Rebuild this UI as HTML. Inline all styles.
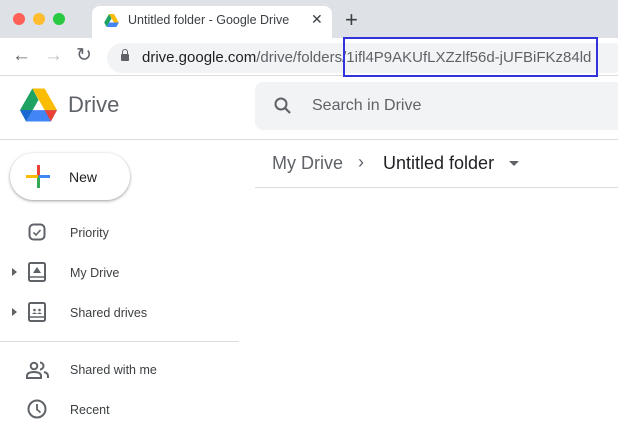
<!DOCTYPE html><html><head><style>
body{margin:0;width:618px;height:423px;overflow:hidden;background:#fff;font-family:"Liberation Sans",sans-serif;position:relative}
.a{position:absolute}
.nav{font-size:12.5px;color:#3c4043;left:70px}
</style></head><body>
<div class="a" style="left:0;top:0;width:618px;height:38px;background:#dee1e6"></div>
<div class="a" style="left:13px;top:13px;width:12px;height:12px;border-radius:50%;background:#fe5f57"></div>
<div class="a" style="left:33px;top:13px;width:12px;height:12px;border-radius:50%;background:#febc2e"></div>
<div class="a" style="left:53px;top:13px;width:12px;height:12px;border-radius:50%;background:#28c840"></div>
<div class="a" style="left:92px;top:6px;width:240px;height:34px;background:#fff;border-radius:8px 8px 0 0"></div>
<svg class="a" style="left:104px;top:14px" width="15" height="13" viewBox="0 0 36 32"><path d="M12 0h12l12 21H24z" fill="#fbbc04"/><path d="M12 0L0 21l6 11 12-21z" fill="#1ea362"/><path d="M6 32h24l6-11H12z" fill="#4285f4"/></svg>
<div class="a" style="left:128px;top:13px;font-size:12.5px;color:#3c4043">Untitled folder - Google Drive</div>
<div class="a" style="left:311px;top:11px;font-size:14px;color:#3c4043">✕</div>
<div class="a" style="left:345px;top:7px;font-size:22px;color:#3c4043">+</div>
<div class="a" style="left:0;top:38px;width:618px;height:37px;background:#fff;border-bottom:1px solid #dadce0"></div>
<div class="a" style="left:12px;top:45px;font-size:19px;color:#5f6368">←</div>
<div class="a" style="left:44px;top:45px;font-size:19px;color:#bdc1c6">→</div>
<div class="a" style="left:76px;top:44px;font-size:19px;color:#5f6368">↻</div>
<div class="a" style="left:107px;top:43px;width:520px;height:30px;background:#f1f3f4;border-radius:15px"></div>
<div class="a" style="left:121px;top:54px;width:8px;height:7px;background:#5f6368;border-radius:1px"></div>
<div class="a" style="left:122px;top:49px;width:4px;height:5px;border:1.5px solid #5f6368;border-bottom:none;border-radius:3px 3px 0 0"></div>
<div class="a" style="left:142px;top:49px;font-size:15px;color:#202124;white-space:nowrap">drive.google.com<span style="color:#5f6368">/drive/folders/1ifl4P9AKUfLXZzlf56d-jUFBiFKz84ld</span></div>
<div class="a" style="left:343px;top:37px;width:251px;height:36px;border:2px solid #3333dd"></div>
<svg class="a" style="left:20px;top:88px" width="37" height="34" viewBox="0 0 36 32"><path d="M12 0h12l12 21H24z" fill="#fbbc04"/><path d="M12 0L0 21l6 11 12-21z" fill="#1ea362"/><path d="M6 32h24l6-11H12z" fill="#4285f4"/><path d="M30 32l6-11H24z" fill="#ea4335"/><path d="M0 21l6 11 6-11z" fill="#1967d2"/></svg>
<div class="a" style="left:68px;top:92px;font-size:22px;color:#5f6368">Drive</div>
<div class="a" style="left:255px;top:82px;width:380px;height:48px;background:#f1f3f4;border-radius:8px"></div>
<svg class="a" style="left:273px;top:96px" width="20" height="20" viewBox="0 0 20 20"><circle cx="8" cy="8" r="5.5" stroke="#5f6368" stroke-width="2" fill="none"/><path d="M12 12l5 5" stroke="#5f6368" stroke-width="2.2"/></svg>
<div class="a" style="left:312px;top:97px;font-size:16px;color:#5f6368">Search in Drive</div>
<div class="a" style="left:0;top:139px;width:618px;height:1px;background:#dadce0"></div>
<div class="a" style="left:272px;top:153px;font-size:18px;color:#5f6368">My Drive</div>
<div class="a" style="left:358px;top:152px;font-size:18px;color:#5f6368">›</div>
<div class="a" style="left:383px;top:153px;font-size:18px;color:#202124">Untitled folder</div>
<div class="a" style="left:509px;top:161px;border:5px solid transparent;border-top-color:#5f6368"></div>
<div class="a" style="left:255px;top:187px;width:363px;height:1px;background:#dadce0"></div>
<div class="a" style="left:10px;top:153px;width:120px;height:47px;border-radius:24px;background:#fff;box-shadow:0 1px 3px rgba(60,64,67,.35),0 1px 2px rgba(60,64,67,.2)"></div>
<div class="a" style="left:37px;top:165px;width:3px;height:11px;background:#ea4335"></div>
<div class="a" style="left:37px;top:176px;width:3px;height:12px;background:#34a853"></div>
<div class="a" style="left:26px;top:175px;width:12px;height:3px;background:#fbbc04"></div>
<div class="a" style="left:39px;top:175px;width:11px;height:3px;background:#4285f4"></div>
<div class="a" style="left:69px;top:169px;font-size:14px;color:#202124">New</div>
<svg class="a" style="left:28px;top:223px" width="20" height="20" viewBox="0 0 20 20"><rect x="1.5" y="1.5" width="15" height="15" rx="4" fill="none" stroke="#5f6368" stroke-width="2"/><path d="M5.5 9.5l2.5 2.5 4.5-5" fill="none" stroke="#5f6368" stroke-width="1.6"/></svg>
<div class="a nav" style="top:226px">Priority</div>
<div class="a" style="left:12px;top:268px;border:4px solid transparent;border-left:5px solid #5f6368"></div>
<svg class="a" style="left:28px;top:262px" width="20" height="22" viewBox="0 0 20 22"><rect x="1" y="1" width="16" height="18" rx="1.5" fill="none" stroke="#5f6368" stroke-width="2"/><path d="M1 15h16" stroke="#5f6368" stroke-width="1.5"/><path d="M5 11l4-6 4 6z" fill="#5f6368"/></svg>
<div class="a nav" style="top:266px">My Drive</div>
<div class="a" style="left:12px;top:308px;border:4px solid transparent;border-left:5px solid #5f6368"></div>
<svg class="a" style="left:28px;top:302px" width="20" height="22" viewBox="0 0 20 22"><rect x="1" y="1" width="16" height="18" rx="1.5" fill="none" stroke="#5f6368" stroke-width="2"/><path d="M1 15h16" stroke="#5f6368" stroke-width="1.5"/><circle cx="6.5" cy="8" r="1.3" fill="#5f6368"/><circle cx="11.5" cy="8" r="1.3" fill="#5f6368"/><path d="M4 12q2.5-3 5 0q2.5-3 5 0z" fill="#5f6368"/></svg>
<div class="a nav" style="top:306px">Shared drives</div>
<div class="a" style="left:0;top:341px;width:239px;height:1px;background:#dadce0"></div>
<svg class="a" style="left:26px;top:361px" width="24" height="18" viewBox="0 0 24 18"><circle cx="8" cy="5" r="3.3" fill="none" stroke="#5f6368" stroke-width="2"/><path d="M1 17v-2q0-4 7-4t7 4v2z" fill="none" stroke="#5f6368" stroke-width="2"/><path d="M14 1.5a3.5 3.5 0 0 1 0 7M18 11q4 1 4 4v2" fill="none" stroke="#5f6368" stroke-width="2"/></svg>
<div class="a nav" style="top:363px">Shared with me</div>
<svg class="a" style="left:27px;top:399px" width="22" height="22" viewBox="0 0 22 22"><circle cx="10" cy="10" r="8.5" fill="none" stroke="#5f6368" stroke-width="2"/><path d="M10 5v5.5l3.5 3" fill="none" stroke="#5f6368" stroke-width="1.8"/></svg>
<div class="a nav" style="top:403px">Recent</div>
</body></html>
